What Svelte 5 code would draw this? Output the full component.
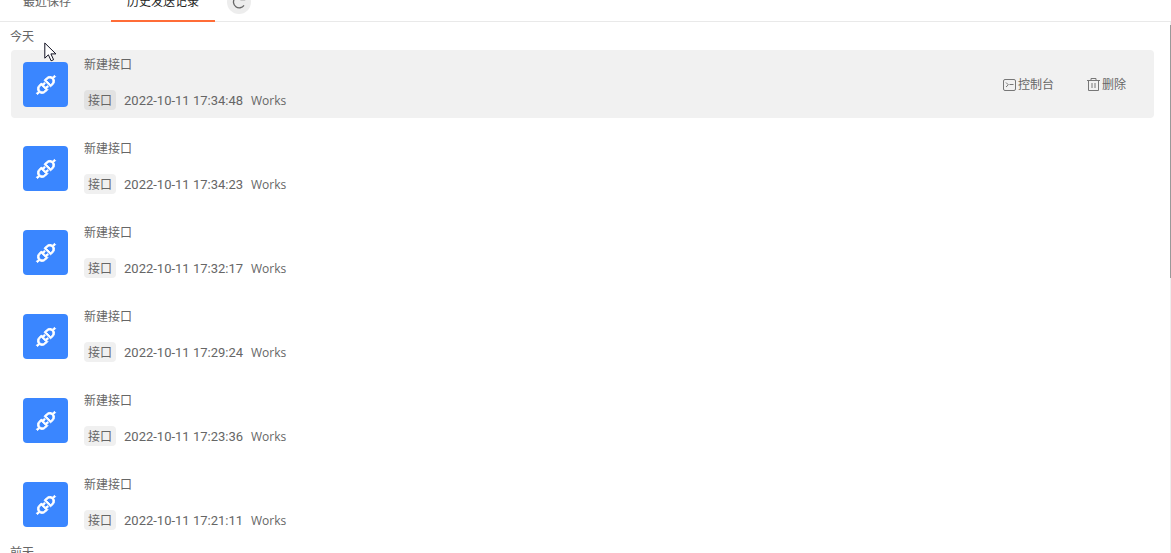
<script>
  const times = ['17:34:48', '17:34:23', '17:32:17', '17:29:24', '17:23:36', '17:21:11'];
  const today = times.map((time, i) => ({
    name: '新建接口',
    kind: '接口',
    date: `2022-10-11 ${time}`,
    project: 'Works',
    active: i === 0
  }));
</script>

<main>
  <header>
    <div class="tabs" role="tablist">
      <button class="tab" role="tab" aria-selected="false">最近保存</button>
      <button class="tab selected" role="tab" aria-selected="true">历史发送记录</button>
    </div>
    <button class="refresh" aria-label="刷新">
      <svg viewBox="0 0 16 16" width="16" height="16" fill="none" stroke="#666" stroke-width="1.3">
        <path d="M11.8 3.4A5.8 5.8 0 1 0 13 11.4M9.4 5.7h4.2V1.8" />
      </svg>
    </button>
  </header>

  <div class="content">
    <section>
      <h2>今天</h2>
      <ul>
        {#each today as item}
          <li class:active={item.active}>
            <span class="logo">
              <svg viewBox="0 -40 1024 1024" width="24" height="24" fill="#fff" stroke="#fff" stroke-width="40">
                <path d="M917.7 148.8l-42.4-42.4c-1.6-1.6-3.6-2.3-5.7-2.3s-4.1.8-5.7 2.3l-76.1 76.1a199.27 199.27 0 00-112.1-34.3c-51.2 0-102.4 19.5-141.5 58.6L432.3 308.7a8.03 8.03 0 000 11.3L704 591.7c1.6 1.6 3.6 2.3 5.7 2.3 2 0 4.1-.8 5.7-2.3l101.9-101.9c68.9-69 77-175.7 24.3-253.5l76.1-76.1c3.1-3.2 3.1-8.3 0-11.4zM769.1 441.7l-59.4 59.4-186.8-186.8 59.4-59.4c24.9-24.9 58.1-38.7 93.4-38.7 35.3 0 68.4 13.7 93.4 38.7 24.9 24.9 38.7 58.1 38.7 93.4 0 35.3-13.8 68.4-38.7 93.4zm-190.2 105a8.03 8.03 0 00-11.3 0L501 613.3 410.7 523l66.7-66.7c3.1-3.1 3.1-8.2 0-11.3L441 408.6a8.03 8.03 0 00-11.3 0L363 475.3l-43-43a7.85 7.85 0 00-5.7-2.3c-2 0-4.1.8-5.7 2.3L206.8 534.2c-68.9 69-77 175.7-24.3 253.5l-76.1 76.1a8.03 8.03 0 000 11.3l42.4 42.4c1.6 1.6 3.6 2.3 5.7 2.3s4.1-.8 5.7-2.3l76.1-76.1c33.7 22.9 72.9 34.3 112.1 34.3 51.2 0 102.4-19.5 141.5-58.6l101.9-101.9c3.1-3.1 3.1-8.2 0-11.3l-43-43 66.7-66.7c3.1-3.1 3.1-8.2 0-11.3l-36.6-36.2zM441.7 769.1a131.32 131.32 0 01-93.4 38.7c-35.3 0-68.4-13.7-93.4-38.7a131.32 131.32 0 01-38.7-93.4c0-35.3 13.7-68.4 38.7-93.4l59.4-59.4 186.8 186.8-59.4 59.4z" />
              </svg>
            </span>
            <div class="info">
              <h3>{item.name}</h3>
              <p>
                <span class="tag">{item.kind}</span>
                <time>{item.date}</time>
                <span>{item.project}</span>
              </p>
            </div>
            {#if item.active}
              <div class="actions">
                <button>
                  <svg viewBox="0 0 15 14" width="15" height="14" fill="none" stroke="#777">
                    <rect x="0.5" y="1.5" width="12" height="11" rx="1.5" />
                    <path d="M3 4.5l2.3 2.3L3 9M6.5 6.5h4" />
                  </svg>控制台
                </button>
                <button>
                  <svg viewBox="0 0 15 14" width="15" height="14" fill="none" stroke="#777">
                    <path d="M0 2.5h13M4 2.5v-2h5v2M1.5 2.5v10h10v-10M5 5v5M8 5v5" />
                  </svg>删除
                </button>
              </div>
            {/if}
          </li>
        {/each}
      </ul>
    </section>
    <section>
      <h2>前天</h2>
    </section>
    <span class="scrollbar"></span>
  </div>

  <svg class="cursor" viewBox="0 0 13 21" width="13" height="21" fill="#fff" stroke="#112" stroke-width="1">
    <path d="M0.8 1v15.2l3.6-3.4 2.7 6 2.5-1.1-2.7-5.8h5z" />
  </svg>
</main>

<style>
  :global(body) {
    background: #fff;
    overflow: hidden;
  }
  main {
    position: relative;
    height: 100vh;
    display: flex;
    flex-direction: column;
    overflow: hidden;
    color: #666;
    font: 12px/20px "Open Sans", "Noto Sans CJK SC", sans-serif;
  }
  h2, h3, p, ul {
    margin: 0;
    padding: 0;
    font-size: 12px;
    font-weight: 400;
  }
  button {
    border: 0;
    padding: 0;
    background: none;
    color: inherit;
    font: inherit;
  }
  header {
    flex: none;
    display: flex;
    align-items: flex-end;
    gap: 12px;
    height: 22px;
    box-sizing: border-box;
    padding-left: 7px;
    box-shadow: inset 0 -1px #e9e9e9;
  }
  .tabs {
    display: flex;
    gap: 24px;
  }
  .tab {
    height: 40px;
    padding: 2px 16px 0;
    border-bottom: 2px solid transparent;
  }
  .selected {
    color: #222;
    border-color: #ff6c37;
  }
  .refresh {
    display: grid;
    place-items: center;
    width: 24px;
    height: 24px;
    margin-bottom: 8px;
    border-radius: 50%;
    background: #ededed;
  }
  .content {
    position: relative;
    flex: 1;
    min-height: 0;
    padding: 5px 17px 0 10px;
    overflow: hidden;
  }
  h2 {
    height: 23px;
  }
  ul {
    display: grid;
    gap: 16px;
    margin: 0 0 5px 1px;
    list-style: none;
  }
  li {
    display: flex;
    align-items: center;
    gap: 16px;
    height: 68px;
    padding: 0 28px 0 12px;
    border-radius: 4px;
  }
  li.active {
    background: #f1f1f1;
  }
  .logo {
    display: grid;
    place-items: center;
    width: 45px;
    height: 45px;
    border-radius: 4px;
    background: #3a86ff;
  }
  .info {
    flex: 1;
    display: grid;
    gap: 16px;
    padding-bottom: 4px;
    line-height: 18px;
  }
  h3 {
    padding-top: 2px;
  }
  p {
    display: flex;
    gap: 8px;
  }
  p > * {
    padding-top: 2px;
  }
  time {
    font-family: Roboto, sans-serif;
    font-size: 13px;
  }
  .tag {
    padding: 2px 4px 0;
    border-radius: 4px;
    background: #f0f0f0;
  }
  .active .tag {
    background: #e2e2e2;
  }
  .actions {
    display: flex;
    gap: 33px;
    padding-top: 2px;
  }
  .actions button {
    display: flex;
    align-items: center;
  }
  .scrollbar {
    position: absolute;
    top: 0;
    right: 0;
    bottom: 0;
    width: 1px;
    background: linear-gradient(#eee 3px, #999 3px 256px, #eee 256px);
  }
  .cursor {
    position: absolute;
    left: 44px;
    top: 42px;
  }
</style>
